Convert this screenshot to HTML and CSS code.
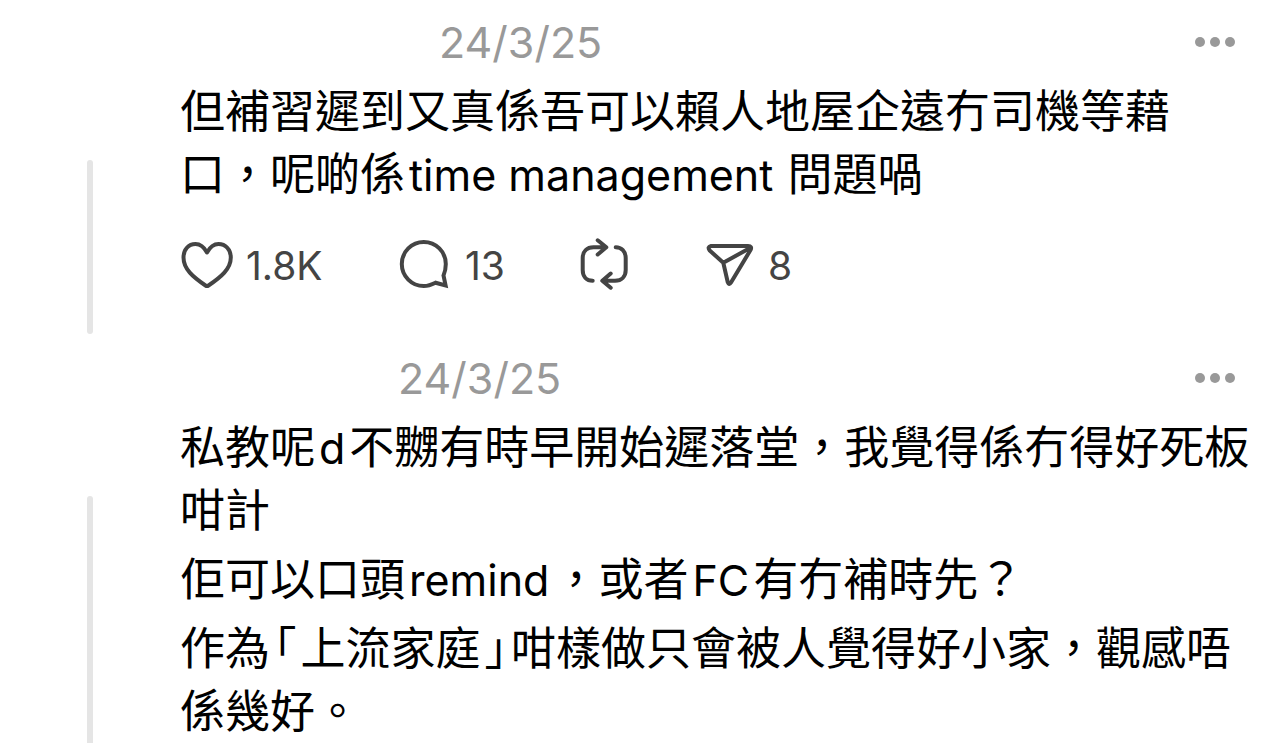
FILE: index.html
```html
<!DOCTYPE html>
<html lang="zh-Hant">
<head>
<meta charset="utf-8">
<meta name="viewport" content="width=device-width, initial-scale=1">
<title>Thread</title>
<link rel="stylesheet" href="styles.css">
</head>
<body>
<main class="thread">
  <article class="post">
    <div class="rail"></div>
    <div class="content">
      <header class="head">
        <span class="author author-long"></span>
        <time class="date" datetime="2025-03-24">24/3/25</time>
        <button class="more" type="button" aria-label="More">
          <svg width="40" height="10" viewBox="0 0 40 10"><circle cx="5" cy="5" r="5"/><circle cx="20" cy="5" r="5"/><circle cx="35" cy="5" r="5"/></svg>
        </button>
      </header>
      <div class="body">
        <p>但補習遲到又真係吾可以賴人地屋企遠冇司機等藉<br>口，呢啲係<span class="latin">time management</span> 問題喎</p>
      </div>
      <div class="actions">
        <button class="action" type="button" aria-label="Like 1.8K">
          <svg class="icon" width="52" height="52" viewBox="0 0 52 52"><path d="M27 13.5C24 8 20 5 15.5 5 8.5 5 3.5 10.5 3.5 18.5 3.5 30 13 38 25.5 46.5Q27 47.5 28.5 46.5C41 38 50.8 30 50.8 18.5 50.8 10.5 45.5 5 38.5 5 34 5 30 8 27 13.5Z"/></svg>
          <span>1.8K</span>
        </button>
        <button class="action" type="button" aria-label="Reply 13">
          <svg class="icon" width="52" height="52" viewBox="0 0 52 52"><path class="sharp" d="M44.5 36.5C46 33 46.8 29 46.8 25A22 22 0 1 0 24.8 47C29 47 32.5 45.7 36.5 43.7L46.6 46.4Z"/></svg>
          <span>13</span>
        </button>
        <button class="action" type="button" aria-label="Repost">
          <svg class="icon" width="52" height="52" viewBox="0 0 52 52"><path d="M27 8.3H14.5C8 8.3 3.7 12.5 3.7 19V31C3.7 37.5 7.5 41.7 13.7 41.7M18.7 1.3 27.3 8.3 18.7 15.5M36.7 8.3C42.5 8.3 46.7 12.5 46.7 19V31C46.7 37.5 42.5 41.7 36 41.7H24M31.7 34.5 23.3 41.7 31.7 48.7"/></svg>
        </button>
        <button class="action" type="button" aria-label="Share 8">
          <svg class="icon" width="48" height="52" viewBox="0 0 48 52"><path d="M5 7H42Q46.500 7.200 44.500 11L25 43.500Q23 46.700 21.700 43L17.300 23.700 3.700 11.500Q1 8 5 7ZM17.300 23.700 44 9"/></svg>
          <span>8</span>
        </button>
      </div>
    </div>
  </article>

  <article class="post">
    <div class="rail rail-open"></div>
    <div class="content content-last">
      <header class="head">
        <span class="author author-short"></span>
        <time class="date" datetime="2025-03-24">24/3/25</time>
        <button class="more" type="button" aria-label="More">
          <svg width="40" height="10" viewBox="0 0 40 10"><circle cx="5" cy="5" r="5"/><circle cx="20" cy="5" r="5"/><circle cx="35" cy="5" r="5"/></svg>
        </button>
      </header>
      <div class="body">
        <p>私教呢<span class="latin">d</span>不嬲有時早開始遲落堂，我覺得係冇得好死板咁計</p>
        <p>佢可以口頭<span class="latin">remind</span>，或者<span class="latin">FC</span>有冇補時先？</p>
        <p>作為<span class="bracket">「</span>上流家庭<span class="bracket">」</span>咁樣做只會被人覺得好小家，觀感唔係幾好。</p>
      </div>
    </div>
  </article>
</main>
</body>
</html>
```

FILE: styles.css
```css
* {
  box-sizing: border-box;
}

body {
  margin: 0;
  background: #fff;
  color: #000;
  font-family: Inter, "Noto Sans CJK TC", sans-serif;
}

button {
  margin: 0;
  padding: 0;
  border: 0;
  background: none;
  color: inherit;
  font: inherit;
}

.post {
  display: grid;
  grid-template-columns: 180px 1fr;
}

.rail {
  width: 6px;
  margin: 160px 0 2px 87px;
  border-radius: 3px;
  background: #e5e5e5;
}

.rail-open {
  margin-bottom: 0;
  border-radius: 3px 3px 0 0;
}

.content {
  padding: 15px 24px 0 0;
}

.content-last {
  padding-bottom: 3px;
}

.head {
  display: flex;
  align-items: center;
  height: 54px;
  padding-right: 25px;
}

.author-long {
  width: 259px;
}

.author-short {
  width: 218px;
}

.date {
  color: #999;
  font-size: 43px;
  line-height: 54px;
}

.more {
  display: flex;
  margin-left: auto;
  fill: #999;
}

.body {
  display: flex;
  flex-direction: column;
  gap: 6px;
  padding-top: 8px;
}

.body p {
  margin: 0;
  font-family: "Noto Sans CJK TC", sans-serif;
  font-size: 45px;
  line-height: 63px;
}

.latin {
  padding: 0 4px;
  font-family: Inter, sans-serif;
  font-size: 43px;
  line-height: 1;
}

.bracket {
  padding: 0 4px;
  font-feature-settings: "halt";
}

.actions {
  display: grid;
  grid-template-columns: 219px 180px 127px 1fr;
  padding: 36px 0 45px;
}

.action {
  display: flex;
  align-items: center;
  gap: 14px;
  height: 52px;
  color: #444;
  font-size: 39px;
}

.icon {
  overflow: visible;
  fill: none;
  stroke: #444;
  stroke-width: 4;
  stroke-linecap: round;
  stroke-linejoin: round;
}

.sharp {
  stroke-linejoin: miter;
}
```
